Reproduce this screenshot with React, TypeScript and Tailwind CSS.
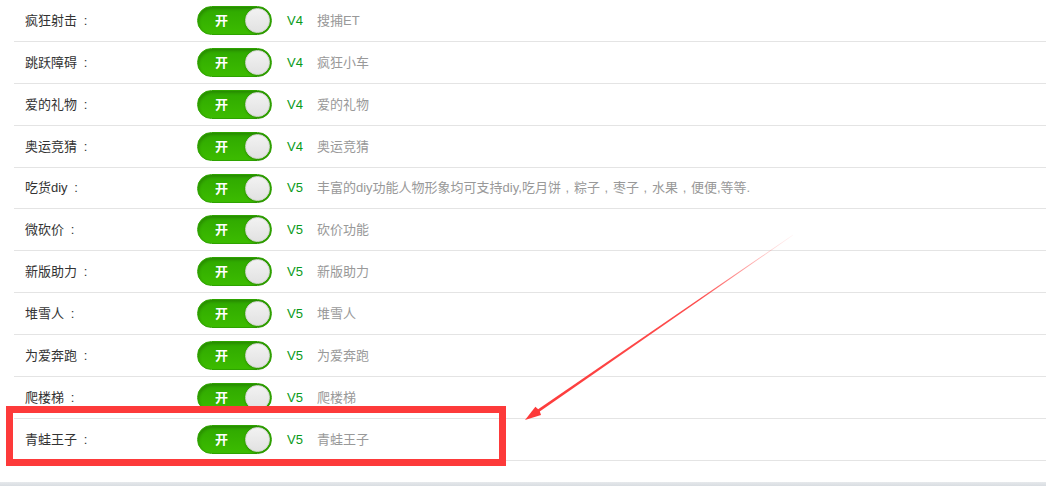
import React from "react";

type Row = { name: string; ver: string; desc: string };

const rows: Row[] = [
  { name: "疯狂射击", ver: "V4", desc: "搜捕ET" },
  { name: "跳跃障碍", ver: "V4", desc: "疯狂小车" },
  { name: "爱的礼物", ver: "V4", desc: "爱的礼物" },
  { name: "奥运竞猜", ver: "V4", desc: "奥运竞猜" },
  {
    name: "吃货diy",
    ver: "V5",
    desc: "丰富的diy功能人物形象均可支持diy,吃月饼，粽子，枣子，水果，便便,等等.",
  },
  { name: "微砍价", ver: "V5", desc: "砍价功能" },
  { name: "新版助力", ver: "V5", desc: "新版助力" },
  { name: "堆雪人", ver: "V5", desc: "堆雪人" },
  { name: "为爱奔跑", ver: "V5", desc: "为爱奔跑" },
  { name: "爬楼梯", ver: "V5", desc: "爬楼梯" },
  { name: "青蛙王子", ver: "V5", desc: "青蛙王子" },
];

// full-width punctuation sits centred in its cell, like the original font
const Punct = ({ text }: { text: string }) => (
  <>
    {text.split(/(，)/).map((p, i) =>
      p === "，" ? (
        <span key={i} className="inline-block w-[13px] text-center">
          ,
        </span>
      ) : (
        <React.Fragment key={i}>{p}</React.Fragment>
      )
    )}
  </>
);

const Toggle = () => (
  <div className="relative flex h-[29px] w-[75px] items-center rounded-full border border-[#2ea300] bg-gradient-to-b from-[#2fa800] to-[#3cbc00] shadow-[inset_1px_2px_3px_rgba(0,0,0,0.18)]">
    <span className="ml-[17px] text-[13px] font-bold leading-none text-white">开</span>
    <span className="absolute right-[1px] top-[1px] h-[25px] w-[25px] rounded-full border border-[#d6d6d6] bg-gradient-to-b from-[#f2f2f2] to-[#e2e2e2] shadow-[0_1px_2px_rgba(0,0,0,0.25)]" />
  </div>
);

export default function App() {
  return (
    <div
      className="relative h-[486px] w-[1046px] overflow-hidden bg-white"
      style={{ fontFamily: '"Liberation Sans", "Noto Sans CJK SC", sans-serif' }}
    >
      <div className="pl-[14px]">
        {rows.map((r, i) => (
          <div
            key={r.name}
            className={
              i === 4
                ? "flex h-[41px] items-center border-b border-[#e4e4e4]"
                : "flex h-[42px] items-center border-b border-[#e4e4e4]"
            }
          >
            <div className="w-[183px] pl-[11px] text-[13px] text-[#333]">
              {r.name}
              <span className="ml-[2px] inline-block w-[13px] text-center">:</span>
            </div>
            <Toggle />
            <div className="ml-[15px] w-[30px] text-[13px] text-[#0a9a1a]">{r.ver}</div>
            <div className="text-[13px] text-[#999]">
              <Punct text={r.desc} />
            </div>
          </div>
        ))}
      </div>

      {/* bottom bar */}
      <div className="absolute bottom-0 left-0 h-[4px] w-full bg-gradient-to-b from-[#e6e9ec] to-[#d9dde2]" />

      {/* highlight box */}
      <div className="absolute left-[6px] top-[406px] h-[60px] w-[500px] border-[7px] border-[#fd3a3a]" />

      {/* arrow */}
      <svg className="pointer-events-none absolute inset-0" width={1046} height={486}>
        <defs>
          <linearGradient id="fade" x1="793" y1="235" x2="525" y2="420" gradientUnits="userSpaceOnUse">
            <stop offset="0" stopColor="#fd3a3a" stopOpacity="0.05" />
            <stop offset="0.35" stopColor="#fd3a3a" stopOpacity="0.9" />
            <stop offset="1" stopColor="#fd3a3a" stopOpacity="1" />
          </linearGradient>
        </defs>
        <polygon
          points="793.2,235.2 792.8,234.8 537.4,409.7 539.0,412.1"
          fill="url(#fade)"
        />
        <polygon points="525,420 535.4,406.8 539.5,410.5 541,415" fill="#fd3a3a" />
      </svg>
    </div>
  );
}
